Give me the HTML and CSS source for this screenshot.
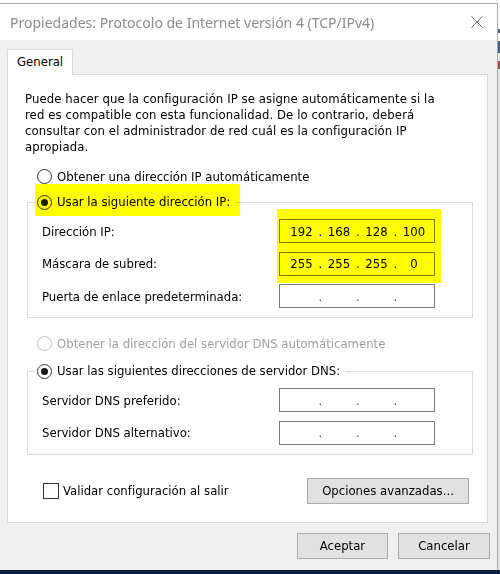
FILE: index.html
```html
<!DOCTYPE html>
<html lang="es">
<head>
<meta charset="utf-8">
<title>Propiedades: Protocolo de Internet versión 4 (TCP/IPv4)</title>
<link rel="stylesheet" href="styles.css">
</head>
<body>
<div class="screen">
  <div class="backdrop-top"></div>
  <div class="middle">
    <div class="window">
      <div class="titlebar">
        <span class="title">Propiedades: Protocolo de Internet versión 4 (TCP/IPv4)</span>
        <svg class="close" width="12" height="12" viewBox="0 0 12 12"><path d="M0.5 0.5L11.5 11.5M11.5 0.5L0.5 11.5" stroke="#6e6e6e" stroke-width="1" fill="none"/></svg>
      </div>
      <div class="client">
        <div class="tabs"><div class="tab">General</div></div>
        <div class="panel">
          <p class="intro">Puede hacer que la configuración IP se asigne automáticamente si la<br>red es compatible con esta funcionalidad. De lo contrario, deberá<br>consultar con el administrador de red cuál es la configuración IP<br>apropiada.</p>

          <div class="option first"><span class="radio"></span><span>Obtener una dirección IP automáticamente</span></div>

          <fieldset class="group group-ip">
            <legend class="legend"><span class="legend-inner"><span class="radio checked"></span><span>Usar la siguiente dirección IP:</span></span><span class="legend-mark"></span></legend>
            <div class="fields">
              <span class="label r1">Dirección IP:</span>
              <div class="ip r1"><span class="seg">192</span><span class="dot">.</span><span class="seg">168</span><span class="dot">.</span><span class="seg">128</span><span class="dot">.</span><span class="seg">100</span></div>
              <span class="label r2">Máscara de subred:</span>
              <div class="ip r2"><span class="seg">255</span><span class="dot">.</span><span class="seg">255</span><span class="dot">.</span><span class="seg">255</span><span class="dot">.</span><span class="seg">0</span></div>
              <span class="label r3">Puerta de enlace predeterminada:</span>
              <div class="ip empty r3"><span class="seg"></span><span class="dot">.</span><span class="seg"></span><span class="dot">.</span><span class="seg"></span><span class="dot">.</span><span class="seg"></span></div>
              <div class="marker"></div>
            </div>
          </fieldset>

          <div class="option disabled"><span class="radio"></span><span>Obtener la dirección del servidor DNS automáticamente</span></div>

          <fieldset class="group group-dns">
            <legend class="legend"><span class="legend-inner"><span class="radio checked"></span><span>Usar las siguientes direcciones de servidor DNS:</span></span></legend>
            <div class="fields">
              <span class="label r1">Servidor DNS preferido:</span>
              <div class="ip empty r1"><span class="seg"></span><span class="dot">.</span><span class="seg"></span><span class="dot">.</span><span class="seg"></span><span class="dot">.</span><span class="seg"></span></div>
              <span class="label r2">Servidor DNS alternativo:</span>
              <div class="ip empty r2"><span class="seg"></span><span class="dot">.</span><span class="seg"></span><span class="dot">.</span><span class="seg"></span><span class="dot">.</span><span class="seg"></span></div>
            </div>
          </fieldset>

          <div class="footer-row">
            <div class="check"><span class="box"></span><span>Validar configuración al salir</span></div>
            <button class="btn btn-adv" type="button">Opciones avanzadas...</button>
          </div>
        </div>
        <div class="actions">
          <button class="btn btn-ok" type="button">Aceptar</button>
          <button class="btn btn-cancel" type="button">Cancelar</button>
        </div>
      </div>
    </div>
    <div class="side"></div>
  </div>
  <div class="taskbar"></div>
</div>
</body>
</html>
```

FILE: styles.css
```css
* { box-sizing: border-box; }
html, body { margin: 0; padding: 0; }
body {
  width: 500px;
  height: 574px;
  overflow: hidden;
  background: #fff;
  font-family: "DejaVu Sans Condensed", "DejaVu Sans", sans-serif;
  font-size: 13px;
  color: #000;
}
.screen { display: flex; flex-direction: column; height: 574px; }
.backdrop-top { height: 3px; flex: none; background: #fbfbfb; }
.middle { flex: 1; display: flex; min-height: 0; }
.window {
  width: 498px;
  flex: none;
  display: flex;
  flex-direction: column;
  border-top: 1px solid #a9a9a9;
  border-right: 1px solid #a9a9a9;
  background: #f0f0f0;
}
.side {
  flex: 1;
  background: linear-gradient(#ffffff 0 26px, #5a6470 26px 30px, #ffffff 30px 38px, #3d5f94 38px 50px, #e9e9e9 50px 58px, #a5524a 58px 66px, #e3e3e3 66px);
}
.taskbar { height: 4px; flex: none; background: #0d203f; }

.titlebar {
  height: 36px;
  flex: none;
  background: #fff;
  display: flex;
  align-items: center;
  justify-content: space-between;
  padding: 0 14px 0 10px;
}
.title {
  font-family: "Noto Sans", sans-serif;
  font-size: 14px;
  color: #8c8c8c;
  white-space: nowrap;
}
.close { display: block; }

.client {
  flex: 1;
  display: flex;
  flex-direction: column;
  padding: 9px 9px 0 7px;
}
.tabs { display: flex; }
.tab {
  width: 66px;
  height: 26px;
  border: 1px solid #d9d9d9;
  border-bottom: none;
  background: #fff;
  padding-left: 9px;
  line-height: 24px;
  margin-bottom: -1px;
  position: relative;
  z-index: 1;
}
.panel {
  background: #fff;
  border: 1px solid #d9d9d9;
  padding: 16px 14px 18px 17px;
}
.intro { margin: 0; line-height: 16px; white-space: nowrap; letter-spacing: 0.08px; }

.option {
  display: flex;
  align-items: center;
  height: 16px;
  gap: 5px;
  white-space: nowrap;
}
.option.first { margin: 13px 0 0 12px; }
.option.disabled { margin: 17px 0 0 12px; color: #a0a0a0; }

.radio {
  width: 15px;
  height: 15px;
  flex: none;
  border: 1px solid #333;
  border-radius: 50%;
  display: flex;
  align-items: center;
  justify-content: center;
}
.radio.checked::after {
  content: "";
  width: 7px;
  height: 7px;
  border-radius: 50%;
  background: #1a1a1a;
}
.disabled .radio { border-color: #c2c2c2; }

.group {
  margin: 10px 0 0 2px;
  padding: 0;
  border: 1px solid #dcdcdc;
  min-width: 0;
}
.group-dns { margin-top: 12px; }
.legend {
  margin-left: 7px;
  padding: 0 5px 0 2px;
  position: relative;
  line-height: 16px;
}
.legend-inner {
  display: flex;
  align-items: center;
  gap: 5px;
  height: 16px;
  white-space: nowrap;
}
.legend-mark {
  position: absolute;
  left: 0;
  top: -10px;
  width: 205px;
  height: 32px;
  background: #ffff00;
  mix-blend-mode: multiply;
  pointer-events: none;
}
.fields {
  display: grid;
  grid-template-columns: 1fr 156px;
  grid-auto-rows: 24px;
  row-gap: 8.5px;
  align-items: center;
  padding: 9px 37px 9px 14px;
}
.label { white-space: nowrap; grid-column: 1; }
.ip { grid-column: 2; }
.r1 { grid-row: 1; }
.r2 { grid-row: 2; }
.r3 { grid-row: 3; }
.ip {
  height: 24px;
  border: 1px solid #7a7a7a;
  background: #fff;
  display: flex;
  align-items: center;
  padding-left: 5px;
}
.seg { width: 33px; text-align: center; }
.dot { width: 4.5px; text-align: center; display: flex; justify-content: center; }
.empty .dot { color: #3c4a7a; }
.marker {
  grid-column: 2;
  grid-row: 1 / 3;
  align-self: stretch;
  margin: -10px -6px -7px -2px;
  background: #ffff00;
  mix-blend-mode: multiply;
  z-index: 1;
  pointer-events: none;
}

.footer-row {
  display: flex;
  align-items: center;
  justify-content: space-between;
  margin-top: 23px;
  padding: 0 4px 0 18px;
}
.check { display: flex; align-items: center; gap: 4px; white-space: nowrap; }
.box {
  width: 16px;
  height: 16px;
  border: 1px solid #333;
  background: #fff;
}
.btn {
  height: 26px;
  border: 1px solid #adadad;
  background: #e1e1e1;
  font-family: inherit;
  font-size: 13px;
  color: #000;
  padding: 0;
}
.btn-adv { width: 162px; }
.actions {
  display: flex;
  justify-content: flex-end;
  gap: 10px;
  margin: 10px -2px 0 0;
}
.btn-ok { width: 91px; }
.btn-cancel { width: 92px; }
```
